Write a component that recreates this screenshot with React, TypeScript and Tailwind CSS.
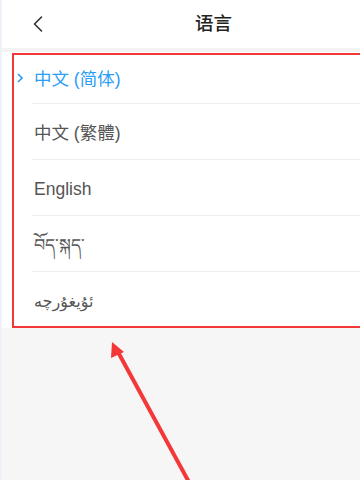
import { ChevronLeft } from "lucide-react";

const langs = [
  { label: "中文 (简体)", active: true },
  { label: "中文 (繁體)" },
  { label: "English" },
  { label: "བོད་སྐད་" },
  { label: "ئۇيغۇرچە", arabic: true },
];

export default function App() {
  return (
    <div
      className="relative h-[480px] w-[360px] overflow-hidden border-l-2 border-[#eef2f8] bg-[#f6f6f6]"
      style={{ fontFamily: '"Liberation Sans", "Noto Sans CJK SC", "DejaVu Sans", sans-serif' }}
    >
      <header className="flex h-12 items-center bg-white">
        <ChevronLeft className="ml-[22px] h-7 w-7 text-[#333]" strokeWidth={1.4} />
        <h1 className="ml-[143px] text-[18.5px] font-medium text-[#222]">语言</h1>
      </header>
      <div className="h-1 bg-[#f3f3f3]" />

      <ul className="bg-white">
        {langs.map((l, i) => (
          <li
            key={l.label}
            className={`flex items-center ${i === 0 ? "h-[52px]" : "h-14"} ${
              i < langs.length - 1 ? "ml-[30px] border-b border-[#eeeeee]" : "ml-[30px]"
            }`}
          >
            <span className="-ml-[16px] flex w-[16px] items-center">
              {l.active && (
                <svg className="h-[10px] w-[8px]" viewBox="0 0 8 10">
                  <path d="M2 1l4 4-4 4" fill="none" stroke="#2a9df4" strokeWidth="1.6" />
                </svg>
              )}
            </span>
            <span
              className={`pl-[2px] pt-[3px] ${l.arabic ? "text-[16px]" : "text-[17.5px]"} ${
                l.active ? "text-[#2a9df4]" : "text-[#555]"
              }`}
              style={l.arabic ? { fontFamily: '"DejaVu Sans", sans-serif' } : undefined}
            >
              {l.label}
            </span>
          </li>
        ))}
      </ul>

      {/* annotation box */}
      <div className="absolute left-[10px] top-[53px] h-[275px] w-[360px] border-2 border-[#f43737]" />

      {/* annotation arrow */}
      <svg className="absolute left-0 top-0 h-[480px] w-[360px]" viewBox="0 0 360 480">
        <line x1="188" y1="484" x2="116" y2="352" stroke="#f43737" strokeWidth="4" />
        <polygon points="110,342 122,352 109,358" fill="#f43737" />
      </svg>
    </div>
  );
}
